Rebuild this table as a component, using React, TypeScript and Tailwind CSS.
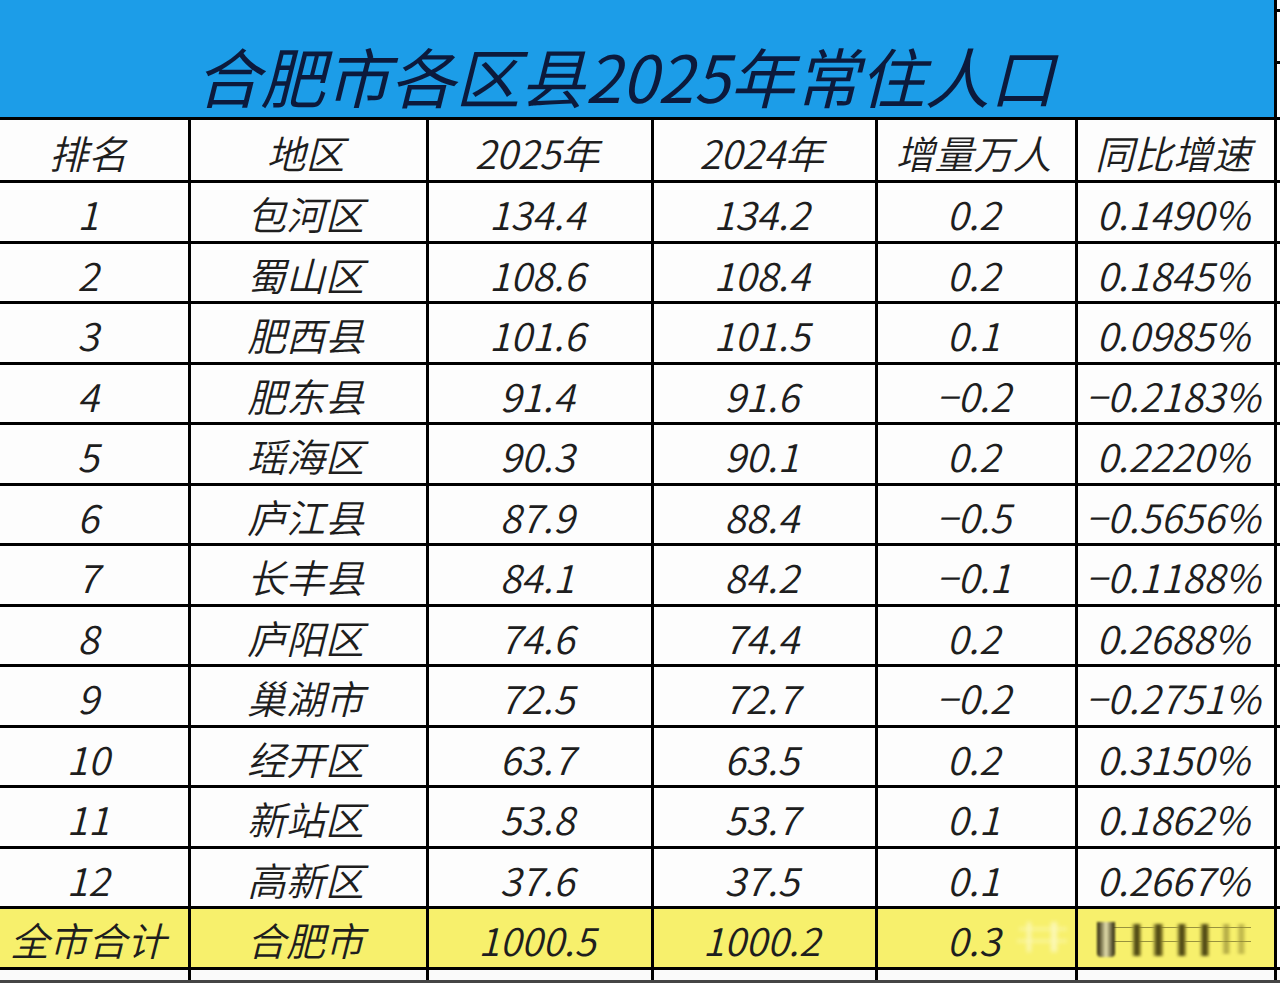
import React from "react";

const rows: string[][] = [
  ["1", "包河区", "134.4", "134.2", "0.2", "0.1490%"],
  ["2", "蜀山区", "108.6", "108.4", "0.2", "0.1845%"],
  ["3", "肥西县", "101.6", "101.5", "0.1", "0.0985%"],
  ["4", "肥东县", "91.4", "91.6", "−0.2", "−0.2183%"],
  ["5", "瑶海区", "90.3", "90.1", "0.2", "0.2220%"],
  ["6", "庐江县", "87.9", "88.4", "−0.5", "−0.5656%"],
  ["7", "长丰县", "84.1", "84.2", "−0.1", "−0.1188%"],
  ["8", "庐阳区", "74.6", "74.4", "0.2", "0.2688%"],
  ["9", "巢湖市", "72.5", "72.7", "−0.2", "−0.2751%"],
  ["10", "经开区", "63.7", "63.5", "0.2", "0.3150%"],
  ["11", "新站区", "53.8", "53.7", "0.1", "0.1862%"],
  ["12", "高新区", "37.6", "37.5", "0.1", "0.2667%"],
];

const header = ["排名", "地区", "2025年", "2024年", "增量万人", "同比增速"];

function Cell({ children, yellow, first }: { children?: React.ReactNode; yellow?: boolean; first?: boolean }) {
  return (
    <div
      className={
        "flex items-center justify-center pt-[4px] text-[39px] leading-none italic font-[350] text-[#1e1e1e] whitespace-nowrap " +
        (first ? "pr-[12px] " : "pr-[6px] ") +
        (yellow ? "bg-[#f7f06c]" : "bg-[#fdfdfd]")
      }
    >
      {children}
    </div>
  );
}

export default function App() {
  return (
    <div className="relative w-[1280px] h-[983px] overflow-hidden bg-[#454545] font-['Noto_Sans_CJK_SC','Noto_Sans',sans-serif]">
      <div className="grid grid-cols-[188px_235px_222px_221px_197px_196px_3px] grid-rows-[117px_60px_repeat(13,57.5px)_10px] gap-[3px] bg-black">
        <div className="col-span-6 flex items-center justify-center bg-[#1c9de8] pt-[34px] pr-[24px]">
          <span className="text-[65px] leading-none italic font-normal text-[#0c1a3c]">
            合肥市各区县2025年常住人口
          </span>
        </div>
        <div className="flex flex-col bg-[#fdfdfd]">
          <div className="h-[9px]" />
          <div className="h-[55px] border-y-[3px] border-black" />
        </div>

        {header.map((h, i) => (
          <Cell key={h} first={i === 0}>{h}</Cell>
        ))}
        <div className="bg-[#fdfdfd]" />

        {rows.map((r) => (
          <React.Fragment key={r[0]}>
            {r.map((c, i) => (
              <Cell key={i} first={i === 0}>{c}</Cell>
            ))}
            <div className="bg-[#fdfdfd]" />
          </React.Fragment>
        ))}

        <Cell yellow first>全市合计</Cell>
        <Cell yellow>合肥市</Cell>
        <Cell yellow>1000.5</Cell>
        <Cell yellow>1000.2</Cell>
        <Cell yellow>0.3</Cell>
        <Cell yellow />
        <div className="bg-[#fdfdfd]" />

        {Array.from({ length: 7 }).map((_, i) => (
          <div key={i} className="bg-[#fafafa]" />
        ))}
      </div>

      {/* watermark */}
      <div className="absolute left-[1015px] top-[920px] w-[55px] h-[34px] opacity-50 blur-[2px]">
        <div className="absolute left-[4px] top-[8px] w-[48px] h-[2px] bg-white" />
        <div className="absolute left-[2px] top-[20px] w-[50px] h-[2px] bg-white" />
        <div className="absolute left-[12px] top-[2px] w-[4px] h-[30px] bg-white" />
        <div className="absolute left-[36px] top-[2px] w-[6px] h-[30px] bg-white" />
      </div>
      <div className="absolute left-[1097px] top-[922px] w-[160px] h-[36px]">
        <div className="absolute left-[2px] top-[5px] w-[152px] h-[1px] bg-[#3a3410] opacity-50" />
        <div className="absolute left-[2px] top-[19px] w-[152px] h-[1px] bg-[#3a3410] opacity-50" />
        <div className="absolute left-0 top-0 w-[18px] h-[35px] rounded-b-[4px] bg-gradient-to-r from-[#2a2508] via-[#e8e2b0] to-[#2a2508] blur-[0.8px]" />
        <div className="absolute left-[35px] top-[2px] w-[9px] h-[32px] bg-gradient-to-r from-[#d0c850] via-[#3a340c] to-[#a09530] blur-[1.5px]" />
        <div className="absolute left-[56px] top-[2px] w-[10px] h-[32px] bg-gradient-to-r from-[#d0c850] via-[#3a340c] to-[#a09530] blur-[1.5px]" />
        <div className="absolute left-[80px] top-[2px] w-[9px] h-[32px] bg-gradient-to-r from-[#d0c850] via-[#3a340c] to-[#a09530] blur-[1.5px]" />
        <div className="absolute left-[103px] top-[2px] w-[9px] h-[32px] bg-gradient-to-r from-[#d0c850] via-[#3a340c] to-[#a09530] blur-[1.5px]" />
        <div className="absolute left-[125px] top-[2px] w-[8px] h-[30px] bg-gradient-to-r from-[#e0d860] via-[#7a7028] to-[#c0b840] opacity-60 blur-[1.5px]" />
        <div className="absolute left-[140px] top-[2px] w-[8px] h-[30px] bg-gradient-to-r from-[#e0d860] via-[#7a7028] to-[#c0b840] opacity-50 blur-[1.5px]" />
      </div>
    </div>
  );
}
